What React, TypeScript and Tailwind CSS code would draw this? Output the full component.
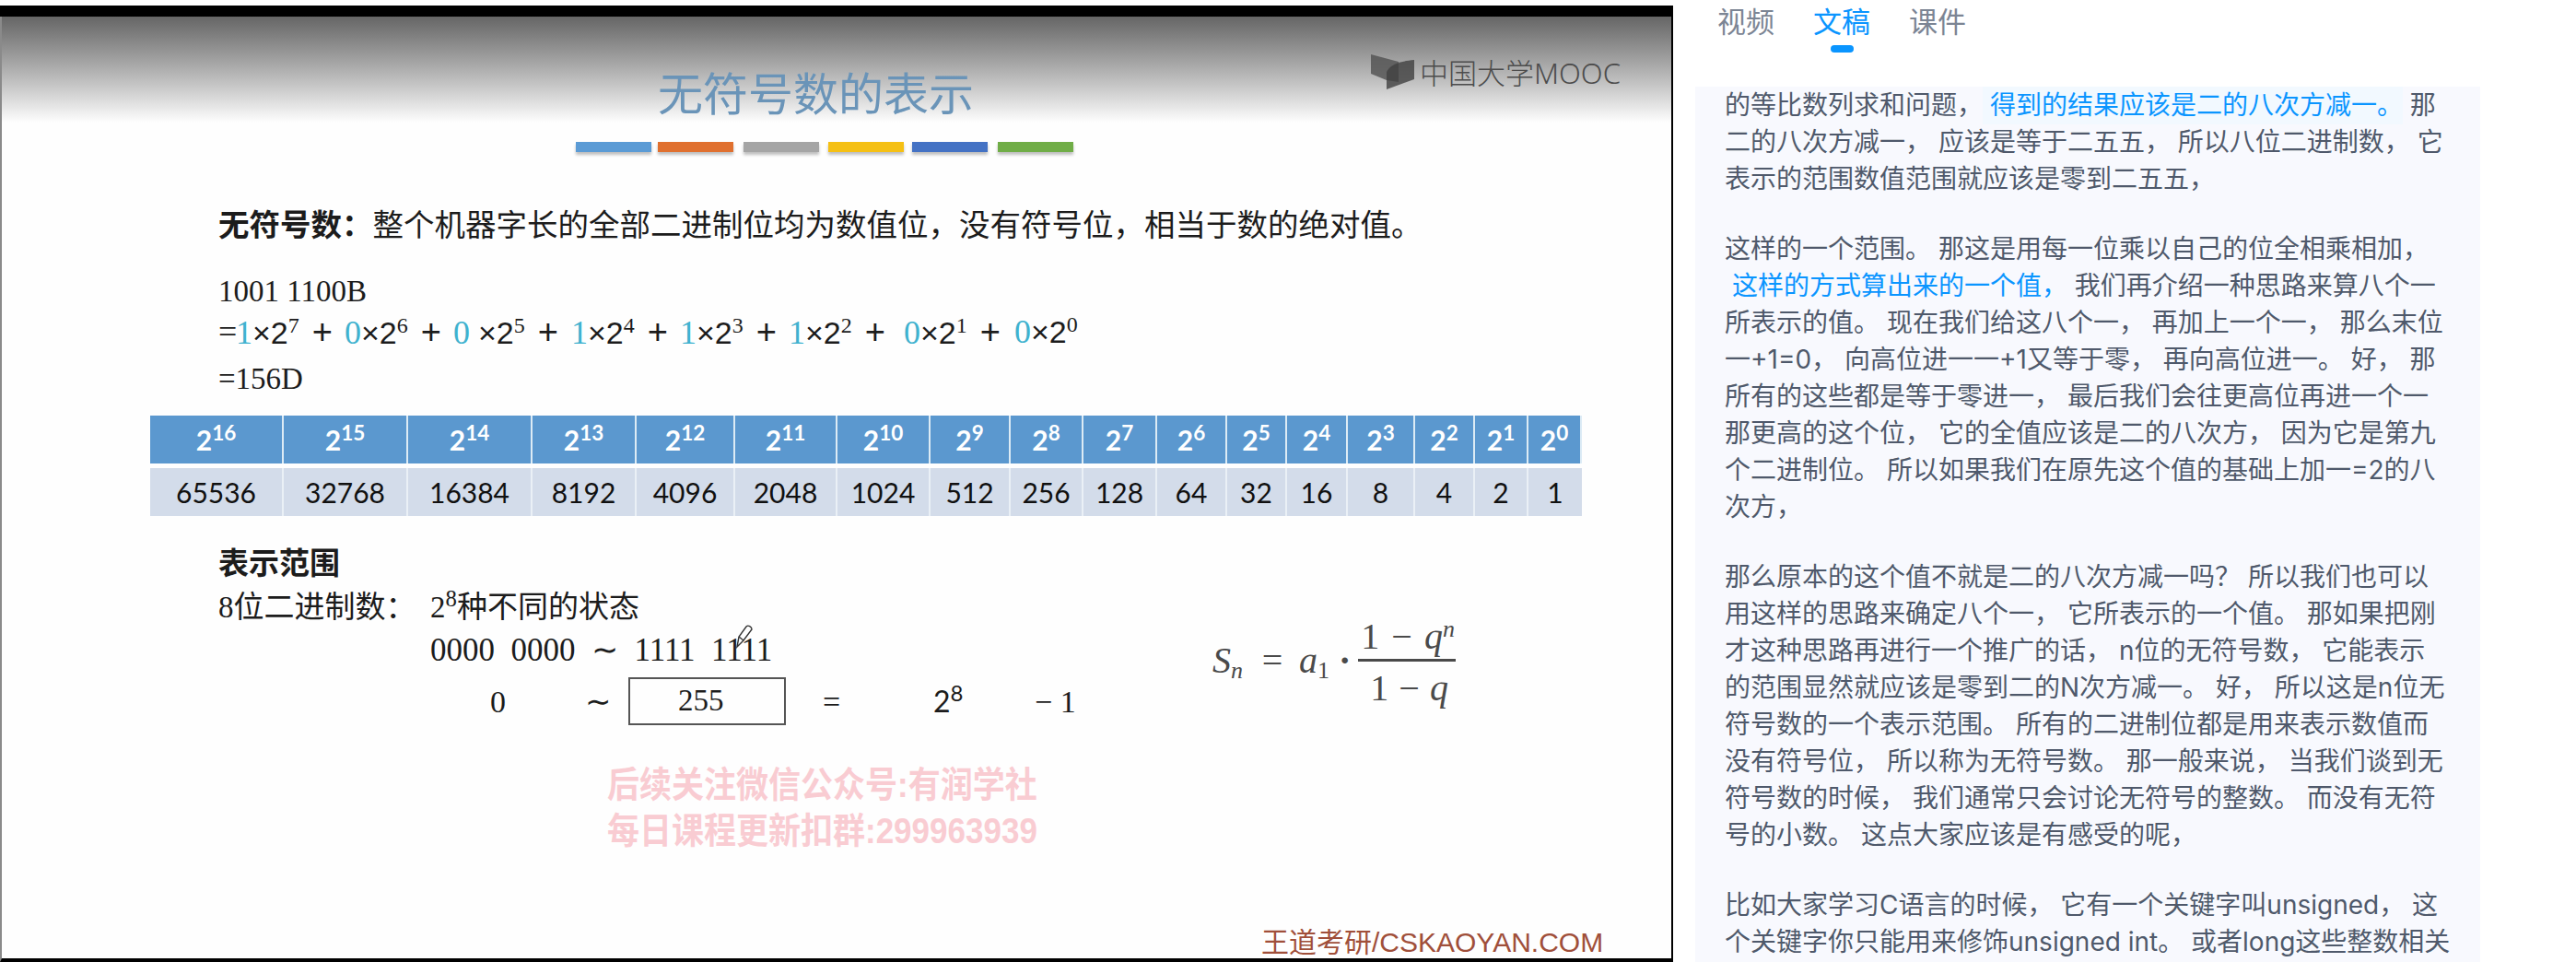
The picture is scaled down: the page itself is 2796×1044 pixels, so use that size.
import React from "react";

const P = [
  [
    <>的等比数列求和问题，<span className="bg-[#f2f9ff] text-[#0a95ff] inline-block h-[41px] -my-px"> 得到的结果应该是二的八次方减一。</span> 那</>,
    "二的八次方减一， 应该是等于二五五， 所以八位二进制数， 它",
    "表示的范围数值范围就应该是零到二五五，",
  ],
  [
    "这样的一个范围。 那这是用每一位乘以自己的位全相乘相加，",
    <><span className="text-[#0a95ff]"> 这样的方式算出来的一个值，</span> 我们再介绍一种思路来算八个一</>,
    "所表示的值。 现在我们给这八个一， 再加上一个一， 那么末位",
    "一+1=0， 向高位进一一+1又等于零， 再向高位进一。 好， 那",
    "所有的这些都是等于零进一， 最后我们会往更高位再进一个一",
    "那更高的这个位， 它的全值应该是二的八次方， 因为它是第九",
    "个二进制位。 所以如果我们在原先这个值的基础上加一=2的八",
    "次方，",
  ],
  [
    "那么原本的这个值不就是二的八次方减一吗？ 所以我们也可以",
    "用这样的思路来确定八个一， 它所表示的一个值。 那如果把刚",
    "才这种思路再进行一个推广的话， n位的无符号数， 它能表示",
    "的范围显然就应该是零到二的N次方减一。 好， 所以这是n位无",
    "符号数的一个表示范围。 所有的二进制位都是用来表示数值而",
    "没有符号位， 所以称为无符号数。 那一般来说， 当我们谈到无",
    "符号数的时候， 我们通常只会讨论无符号的整数。 而没有无符",
    "号的小数。 这点大家应该是有感受的呢，",
  ],
  [
    "比如大家学习C语言的时候， 它有一个关键字叫unsigned， 这",
    "个关键字你只能用来修饰unsigned int。 或者long这些整数相关",
  ],
];

const COLS = [
  ["16", "65536"], ["15", "32768"], ["14", "16384"], ["13", "8192"], ["12", "4096"], ["11", "2048"],
  ["10", "1024"], ["9", "512"], ["8", "256"], ["7", "128"], ["6", "64"], ["5", "32"], ["4", "16"],
  ["3", "8"], ["2", "4"], ["1", "2"], ["0", "1"],
];

const TERMS: [string, string, string, string][] = [
  ["1", "", "7", "w-[118px]"],
  ["0", "", "6", "w-[118px]"],
  ["0", " ", "5", "w-[128px]"],
  ["1", "", "4", "w-[118px]"],
  ["1", "", "3", "w-[118px]"],
  ["1", "", "2", "w-[125px]"],
  ["0", "", "1", "w-[120px]"],
  ["0", "", "0", "w-[76px]"],
];

const BARS = [
  "bg-[#5b9bd5] w-[82px]",
  "bg-[#e0702f] w-[82px] ml-[7px]",
  "bg-[#a5a5a5] w-[82px] ml-[11px]",
  "bg-[#f5c014] w-[82px] ml-[10px]",
  "bg-[#4472c4] w-[82px] ml-[9px]",
  "bg-[#70ad47] w-[82px] ml-[11px]",
];

const CJK = "font-['Noto_Sans_CJK_SC',sans-serif]";
const SERIF = "font-['Liberation_Serif','Noto_Sans_CJK_SC',serif]";

export default function App() {
  return (
    <div className="h-[1044px] w-[2796px] overflow-hidden bg-white flex">
      <div className="w-[1816px] h-[1044px] pt-[6px] shrink-0 flex flex-col">
        <div className="h-[12px] bg-black shrink-0" />
        <div className={`relative flex-1 flex flex-col border-l-2 border-l-[#8a8a8a] border-r-2 border-r-black border-b-4 border-b-black bg-[#fefefe] text-black ${SERIF}`}>
          <div className="absolute left-0 right-0 top-0 h-[115px] bg-gradient-to-b from-[#666666] to-[#fefefe]" />
          <div className="relative ml-[712px] mt-[54px] h-[54px] leading-[54px] text-[49px] text-[#6a94b8] font-['Noto_Sans_CJK_SC',sans-serif] whitespace-nowrap">
            无符号数的表示
          </div>
          <div className="relative flex ml-[623px] mt-[28px] h-[11px]">
            {BARS.map((b, i) => (
              <div key={i} className={`${b} h-[11px] shadow-[0_3px_3px_rgba(0,0,0,0.25)]`} />
            ))}
          </div>
          <div className="ml-[235px] mt-[57px] h-[40px] leading-[40px] text-[33.5px] whitespace-nowrap text-[#1c1c1c]">
            <span className={`${CJK} font-bold`}>无符号数：</span>
            <span className={CJK}>整个机器字长的全部二进制位均为数值位，没有符号位，相当于数的绝对值。</span>
          </div>
          <div className="ml-[235px] mt-[34px] h-[40px] leading-[40px] text-[33px] text-[#1c1c1c]">1001 1100B</div>
          <div className="ml-[235px] mt-[4px] h-[40px] leading-[40px] text-[36px] whitespace-pre text-[#1c1c1c] flex">
            <span className="w-[19px]">=</span>
            {TERMS.map(([d, sp, e, w], i) => (
              <span key={i} className={`${w} shrink-0`}>
                <span className="text-[#3fb2cf]">{d}</span>
                {sp}
                <span className="font-['Liberation_Sans',sans-serif] text-[34px]">×2</span>
                <sup className="text-[24px]">{e}</sup>
                {i < 7 ? <span className="font-['Liberation_Sans',sans-serif] text-[38px] ml-[14px]">+</span> : null}
              </span>
            ))}
          </div>
          <div className="ml-[235px] mt-[11px] h-[40px] leading-[40px] text-[33px] text-[#1c1c1c]">=156D</div>
          <div className="ml-[161px] mt-[20px] grid grid-cols-[145px_135px_135px_113px_107px_111px_101px_87px_79px_80px_76px_65px_66px_73px_65px_58px_58px] grid-rows-[52px_52px] gap-y-[5px] w-[1554px] font-['Lato',sans-serif]">
            {COLS.map(([e]) => (
              <div key={e} className="bg-[#5b98cf] border-r-2 border-r-[#dcebf5] last:border-r-0 flex items-center justify-center text-white font-bold text-[30px] leading-none">
                <span>2<sup>{e}</sup></span>
              </div>
            ))}
            {COLS.map(([e, v]) => (
              <div key={e} className="bg-[#d3dcea] border-r-2 border-r-[#eaf0f6] last:border-r-0 flex items-center justify-center text-[#111] text-[30px] leading-none">
                {v}
              </div>
            ))}
          </div>
          <div className={`ml-[235px] mt-[29px] h-[40px] leading-[40px] text-[33px] font-bold text-[#1c1c1c] ${CJK}`}>表示范围</div>
          <div className="ml-[235px] mt-[10px] h-[40px] leading-[40px] text-[33px] flex text-[#1c1c1c] whitespace-nowrap">
            <span className="w-[230px]">8位二进制数：</span>
            <span>2<sup>8</sup>种不同的状态</span>
          </div>
          <div className="relative ml-[465px] mt-[7px] h-[40px] leading-[40px] text-[35px] whitespace-pre text-[#1c1c1c]">
            0000  0000  ∼  1111  1111
            <svg width="22" height="26" viewBox="0 0 22 26" className="absolute left-[330px] top-[-8px]" fill="none" stroke="#333" strokeWidth="1.4">
              <path d="M3 24 L5 13 L13 2 C15 0 19 2 19 5 L10 17 Z" />
              <path d="M5 13 L10 17" />
            </svg>
          </div>
          <div className="ml-[235px] mt-[9px] h-[52px] flex items-center text-[34px] text-[#1c1c1c] whitespace-nowrap">
            <span className="ml-[295px] w-[103px]">0</span>
            <span className="w-[47px]">∼</span>
            <div className="w-[171px] h-[52px] border-2 border-[#555] flex items-center pl-[52px] text-[33px]">255</div>
            <span className="ml-[40px] w-[120px]">=</span>
            <span className="w-[110px] font-['Lato',sans-serif] text-[32px]">2<sup>8</sup></span>
            <span>− 1</span>
          </div>

          <div className="absolute left-[1314px] top-[649px] flex items-center text-[#4a4a4a] text-[40px] italic whitespace-nowrap">
            <span className="mb-[10px]">S<sub className="text-[26px]">n</sub></span>
            <span className="not-italic ml-[17px] mr-[14px] w-[30px] text-center mb-[10px]">=</span>
            <span className="mb-[10px]">a<sub className="not-italic text-[26px]">1</sub></span>
            <span className="not-italic ml-[10px] mr-[8px] font-bold mb-[10px]">·</span>
            <div className="flex flex-col items-start w-[106px]">
              <span className="border-b-[3px] border-[#4a4a4a] w-full pl-[3px] leading-[48px] h-[51px]"><span className="not-italic">1<span className="mx-[13px]">−</span></span>q<sup className="text-[26px]">n</sup></span>
              <span className="leading-[58px] pl-[13px]"><span className="not-italic">1<span className="mx-[11px]">−</span></span>q</span>
            </div>
          </div>

          <div className="absolute left-[657px] top-[813px] w-[480px] text-[#f9ccd2] font-bold text-[35px] leading-[45px] whitespace-nowrap scale-y-110 font-['Liberation_Sans','Noto_Sans_CJK_SC',sans-serif]">
            <div>后续关注微信公众号:有润学社</div>
            <div>每日课程更新扣群:299963939</div>
          </div>

          <div className="absolute left-[1367px] top-[985px] text-[#a04f3a] text-[30px] leading-[40px] whitespace-nowrap font-['Liberation_Sans','Noto_Sans_CJK_SC',sans-serif]">
            王道考研/CSKAOYAN.COM
          </div>

          <div className="absolute left-[1486px] top-[41px] flex items-center">
            <svg width="48" height="40" viewBox="0 0 48 40" className="shrink-0">
              <path d="M0 0 L30 8 L30 30 L17 28 L0 21 Z" fill="#505050" fillOpacity="0.8" />
              <path d="M17 19 C20 13 26 8 47 6 L47 27 L17 38 Z" fill="#404040" fillOpacity="0.8" />
            </svg>
            <span className="ml-[5px] text-[#4c4c4c] text-[31px] leading-[40px] whitespace-nowrap font-light font-['Noto_Sans','Noto_Sans_CJK_SC',sans-serif]">中国大学MOOC</span>
          </div>
        </div>
      </div>

      <div className="flex-1 pl-[24px] flex flex-col font-['Inter','Noto_Sans_CJK_SC',sans-serif]">
        <div className="h-[94px] shrink-0 flex items-start pl-[24px] pt-[4px] gap-[42px] text-[31px] leading-[40px]">
          <span className="text-[#7c8594]">视频</span>
          <div className="flex flex-col items-center">
            <span className="text-[#0a95ff]">文稿</span>
            <span className="w-[25px] h-[8px] mt-[5px] rounded-full bg-[#0a95ff]" />
          </div>
          <span className="text-[#7c8594]">课件</span>
        </div>
        <div className="w-[852px] flex-1 bg-[#f8f9fe] pl-[32px] text-[28px] leading-[40px] text-[#4f596b] whitespace-pre flex flex-col gap-[36px] overflow-hidden">
          {P.map((lines, i) => (
            <div key={i}>
              {lines.map((l, j) => (
                <div key={j} className="h-[40px]">{l}</div>
              ))}
            </div>
          ))}
        </div>
      </div>
    </div>
  );
}
